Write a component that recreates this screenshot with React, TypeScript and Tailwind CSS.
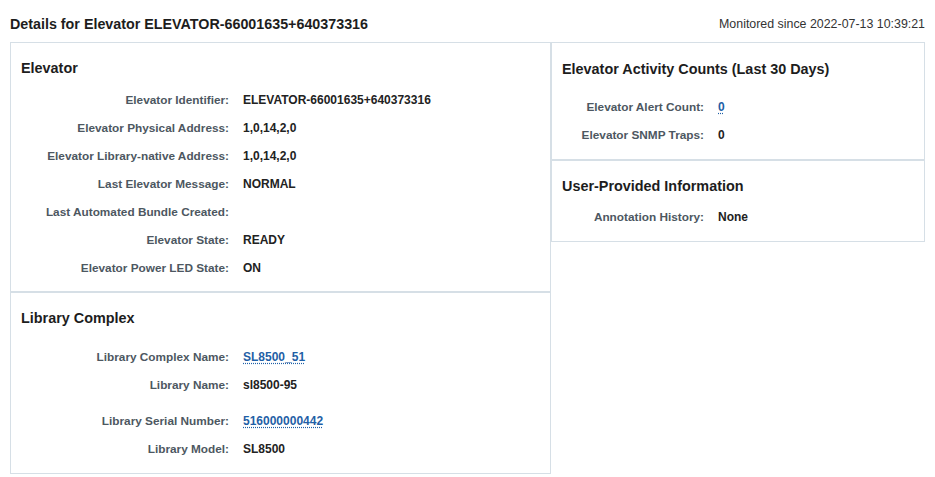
import React from "react";

type Row = { label: string; value?: string; link?: boolean; extraTop?: boolean };

const elevatorRows: Row[] = [
  { label: "Elevator Identifier:", value: "ELEVATOR-66001635+640373316" },
  { label: "Elevator Physical Address:", value: "1,0,14,2,0" },
  { label: "Elevator Library-native Address:", value: "1,0,14,2,0" },
  { label: "Last Elevator Message:", value: "NORMAL" },
  { label: "Last Automated Bundle Created:" },
  { label: "Elevator State:", value: "READY" },
  { label: "Elevator Power LED State:", value: "ON" },
];

const libraryRows: Row[] = [
  { label: "Library Complex Name:", value: "SL8500_51", link: true },
  { label: "Library Name:", value: "sl8500-95" },
  { label: "Library Serial Number:", value: "516000000442", link: true, extraTop: true },
  { label: "Library Model:", value: "SL8500" },
];

const activityRows: Row[] = [
  { label: "Elevator Alert Count:", value: "0", link: true },
  { label: "Elevator SNMP Traps:", value: "0" },
];

const userRows: Row[] = [{ label: "Annotation History:", value: "None" }];

function Rows({ rows, labelWidth }: { rows: Row[]; labelWidth: string }) {
  return (
    <div className="flex flex-col">
      {rows.map((r) => (
        <div key={r.label} className={`flex h-[28px] items-center gap-[14px] text-[12px] leading-[16px] font-bold ${r.extraTop ? "mt-[8px]" : ""}`}>
          <div className={`${labelWidth} shrink-0 text-right text-[11.8px] text-[#4d5761]`}>{r.label}</div>
          {r.value &&
            (r.link ? (
              <a href="#" className="text-[#1f5fa6] underline decoration-dotted underline-offset-2">
                {r.value}
              </a>
            ) : (
              <div className="text-[#222]">{r.value}</div>
            ))}
        </div>
      ))}
    </div>
  );
}

function Panel({ title, children, className }: { title: string; children: React.ReactNode; className: string }) {
  return (
    <section className={`border border-[#d6dfe6] px-[10px] ${className}`}>
      <h2 className="text-[14.4px] leading-[18px] font-bold text-[#1d1d1d]">{title}</h2>
      {children}
    </section>
  );
}

export default function App() {
  return (
    <div className="min-h-screen bg-white font-['Liberation_Sans',Arial,sans-serif]">
      <div className="ml-[10px] w-[915px]">
        <header className="flex h-[42px] items-center justify-between pt-[6px]">
          <h1 className="text-[14.3px] leading-[18px] font-bold text-[#1d1d1d]">
            Details for Elevator ELEVATOR-66001635+640373316
          </h1>
          <span className="text-[12.4px] leading-[18px] text-[#333]">Monitored since 2022-07-13 10:39:21</span>
        </header>

        <div className="flex items-start">
          <div className="flex w-[541px] flex-col">
            <Panel title="Elevator" className="pt-[16px] pb-[9px]">
              <div className="mt-[9px]">
                <Rows rows={elevatorRows} labelWidth="w-[208px]" />
              </div>
            </Panel>
            <Panel title="Library Complex" className="pt-[16px] pb-[10px]">
              <div className="mt-[16px]">
                <Rows rows={libraryRows} labelWidth="w-[208px]" />
              </div>
            </Panel>
          </div>

          <div className="flex w-[374px] flex-col">
            <Panel title="Elevator Activity Counts (Last 30 Days)" className="pt-[17px] pb-[10px]">
              <div className="mt-[15px]">
                <Rows rows={activityRows} labelWidth="w-[142px]" />
              </div>
            </Panel>
            <Panel title="User-Provided Information" className="pt-[16px] pb-[10px]">
              <div className="mt-[8px]">
                <Rows rows={userRows} labelWidth="w-[142px]" />
              </div>
            </Panel>
          </div>
        </div>
      </div>
    </div>
  );
}
